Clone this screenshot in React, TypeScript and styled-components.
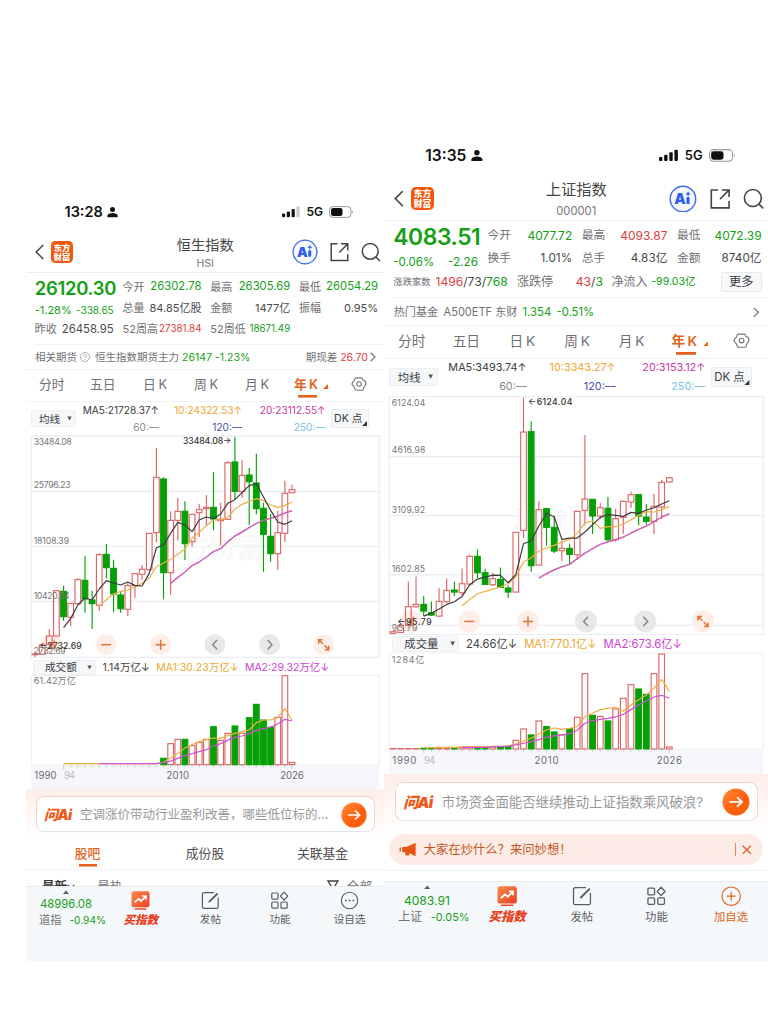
import React from "react";
import styled, { createGlobalStyle, css } from "styled-components";

/* ---------- palette ---------- */
const GREEN = "#14a014";
const RED = "#e03c3c";
const INK = "#4a4a4c";
const DIM = "#707073";
const ORANGE = "#e2631b";
const AMBER = "#eda832";
const PINK = "#c83aa0";
const VIOLET = "#cf3fd2";
const BLUE = "#4250ae";
const SKY = "#77bfe6";

const Global = createGlobalStyle`
  * { box-sizing: border-box; }
  body { margin: 0; background: #fff; }
  #root { font-family: Inter, "Noto Sans CJK SC", sans-serif; color: ${INK}; }
  svg { display: block; flex: none; }
`;

/* ---------- data ---------- */
type Candle = [number, number, number, number, "r" | "g"];
type Series = { from: number; ys: number[] };

interface ChartData {
  width: number;
  right: number;
  step: number;
  top: number;
  height: number;
  grid: number[];
  frame: [number, number];
  candles: Candle[];
  ma: [Series, Series, Series];
  scale: { text: string; y: number; w: number }[];
  high: { text: string; x: number; y: number; w: number };
  low: { text: string; x: number; y: number; w: number };
  mark: { x: number; y: number };
  tools: { xs: number[]; y: number; r: number };
}

interface VolumeData {
  width: number;
  right: number;
  step: number;
  top: number;
  height: number;
  base: number;
  frameTop: number;
  axisY: number;
  bars: { i: number; y: number; c: "r" | "g" }[];
  lines: [Series, Series];
  label: { text: string; w: number; y: number };
}

const bars = (from: number, list: string) =>
  list.split(" ").map((s, n) => ({ i: from + n, y: Number(s.slice(1)), c: s[0] as "r" | "g" }));

const hsiChart: ChartData = {
  width: 1074, right: 1060, step: 21.42, top: 24, height: 678,
  grid: [199, 364, 529], frame: [33, 697],
  candles: [
    [680, 687, 689, 695, "r"], [656, 660, 688, 688, "r"], [613, 633, 658, 662, "r"], [497, 497, 633, 633, "r"],
    [482, 499, 575, 587, "g"], [535, 535, 577, 604, "r"], [459, 464, 536, 536, "r"], [392, 466, 522, 563, "g"],
    [497, 525, 536, 612, "g"], [385, 389, 541, 558, "r"], [357, 388, 428, 460, "g"], [404, 430, 507, 562, "g"],
    [497, 510, 551, 563, "g"], [475, 482, 553, 573, "r"], [446, 446, 482, 518, "r"], [421, 433, 448, 465, "r"],
    [325, 325, 434, 434, "r"], [69, 157, 323, 352, "r"], [157, 162, 443, 523, "g"], [259, 286, 443, 509, "r"],
    [219, 259, 286, 346, "r"], [229, 259, 356, 405, "g"], [268, 268, 350, 365, "r"], [237, 254, 263, 336, "r"],
    [210, 247, 251, 302, "r"], [142, 247, 282, 316, "g"], [233, 283, 287, 361, "r"], [108, 113, 283, 285, "r"],
    [37, 111, 199, 222, "g"], [105, 151, 200, 219, "r"], [129, 150, 170, 300, "g"], [86, 174, 251, 268, "g"],
    [233, 250, 328, 440, "g"], [267, 334, 386, 410, "g"], [257, 323, 386, 435, "r"], [167, 205, 325, 351, "r"],
    [179, 194, 203, 204, "r"],
  ],
  ma: [
    { from: 4, ys: [608, 580, 540, 519, 525, 492, 467, 474, 480, 471, 481, 483, 445, 369, 359, 325, 292, 300, 320, 285, 276, 281, 267, 235, 224, 203, 182, 176, 216, 256, 291, 298, 287] },
    { from: 9, ys: [545, 524, 507, 499, 495, 486, 475, 459, 425, 414, 403, 388, 372, 340, 322, 302, 285, 284, 278, 252, 238, 229, 221, 227, 240, 247, 241, 231] },
    { from: 19, ys: [475, 457, 441, 422, 411, 396, 380, 371, 350, 333, 321, 308, 295, 286, 280, 273, 264, 257] },
  ],
  scale: [
    { text: "33484.08", y: 60, w: 114 }, { text: "25796.23", y: 190, w: 111 },
    { text: "18108.39", y: 356, w: 106 }, { text: "10420.54", y: 522, w: 108 }, { text: "2732.69", y: 688, w: 96 },
  ],
  high: { text: "33484.08→", x: 471, y: 58, w: 145 },
  low: { text: "←2732.69", x: 40, y: 671, w: 127 },
  mark: { x: 385, y: 398 },
  tools: { xs: [77, 240, 404, 567, 731, 893], y: 659, r: 31 },
};

const sseChart: ChartData = {
  width: 1152, right: 1138, step: 23.03, top: 23, height: 727,
  grid: [214, 391, 568, 720], frame: [34, 748],
  candles: [
    [738, 739, 744, 745, "r"], [716, 720, 741, 743, "r"], [588, 664, 720, 724, "r"], [573, 657, 664, 667, "r"],
    [632, 657, 677, 692, "g"], [648, 682, 689, 692, "g"], [608, 648, 692, 694, "r"], [579, 615, 649, 653, "r"],
    [588, 614, 620, 632, "g"], [549, 595, 622, 630, "r"], [507, 513, 596, 600, "r"], [492, 513, 562, 578, "g"],
    [550, 562, 597, 598, "g"], [562, 580, 598, 602, "r"], [546, 582, 606, 608, "g"], [600, 608, 620, 638, "g"],
    [440, 441, 620, 620, "r"], [37, 140, 435, 457, "r"], [108, 139, 541, 559, "g"], [348, 373, 539, 539, "r"],
    [367, 370, 426, 481, "g"], [392, 426, 497, 503, "g"], [465, 489, 496, 527, "r"], [474, 489, 507, 537, "g"],
    [376, 378, 508, 522, "r"], [149, 341, 375, 420, "r"], [341, 342, 392, 446, "g"], [352, 367, 392, 402, "r"],
    [335, 369, 463, 466, "g"], [371, 400, 463, 469, "r"], [346, 348, 396, 445, "r"], [319, 328, 350, 368, "r"],
    [327, 328, 392, 420, "g"], [356, 395, 408, 418, "g"], [325, 363, 408, 446, "r"], [283, 291, 365, 400, "r"],
    [276, 277, 290, 290, "r"],
  ],
  ma: [
    { from: 4, ys: [692, 683, 671, 657, 649, 633, 598, 581, 575, 569, 570, 592, 568, 475, 467, 422, 384, 394, 462, 458, 458, 440, 418, 396, 388, 390, 393, 381, 384, 374, 367, 356, 346] },
    { from: 9, ys: [662, 642, 625, 618, 611, 605, 595, 575, 529, 518, 497, 488, 480, 470, 462, 444, 413, 407, 429, 424, 424, 416, 403, 390, 379, 380, 374, 363] },
    { from: 19, ys: [578, 565, 553, 544, 537, 520, 503, 490, 477, 469, 463, 455, 443, 432, 422, 409, 395, 385] },
  ],
  scale: [
    { text: "6124.04", y: 63, w: 101 }, { text: "4616.98", y: 202, w: 101 },
    { text: "3109.92", y: 382, w: 100 }, { text: "1602.85", y: 559, w: 100 }, { text: "95.79", y: 738, w: 77 },
  ],
  high: { text: "←6124.04", x: 432, y: 60, w: 133 },
  low: { text: "←95.79", x: 40, y: 720, w: 103 },
  mark: { x: 385, y: 428 },
  tools: { xs: [80, 256, 432, 606, 784, 957], y: 708, r: 33 },
};

const hsiVolume: VolumeData = {
  width: 1074, right: 1060, step: 21.42, top: 75, height: 342, base: 345, frameTop: 77, axisY: 386,
  bars: bars(18, "g325 r281 r268 g268 r287 r277 r268 g230 r271 r250 g228 r250 g203 g163 g210 g232 r202 r77 r337"),
  lines: [
    { from: 4, ys: [341, 341, 341, 341, 341, 341, 341, 341, 341, 341, 341, 341, 341, 341, 337, 324, 310, 294, 284, 275, 269, 264, 265, 256, 250, 245, 240, 218, 210, 210, 202, 176, 210] },
    { from: 9, ys: [341, 341, 341, 341, 341, 341, 341, 341, 341, 338, 333, 325, 317, 311, 305, 299, 288, 281, 271, 262, 258, 250, 241, 236, 231, 222, 208, 213] },
  ],
  label: { text: "61.42万亿", w: 126, y: 103 },
};

const sseVolume: VolumeData = {
  width: 1152, right: 1138, step: 23.03, top: 67, height: 367, base: 359, frameTop: 70, axisY: 404,
  bars: bars(0, "r357 r357 r357 r357 g356 g355 r355 r355 g355 r353 r351 g353 g353 r352 g351 g350 r332 r298 g316 r274 g291 g307 r316 g297 r263 r132 g257 r260 g274 r238 r206 r165 g178 g194 r132 r73 r352"),
  lines: [
    { from: 4, ys: [354, 354, 353, 353, 353, 352, 351, 351, 351, 350, 350, 349, 343, 334, 326, 313, 301, 295, 299, 296, 291, 261, 251, 240, 236, 233, 245, 226, 210, 196, 175, 149, 185] },
    { from: 9, ys: [354, 353, 353, 353, 352, 351, 350, 346, 341, 336, 330, 323, 319, 316, 312, 302, 281, 273, 269, 266, 262, 254, 240, 226, 214, 202, 197, 206] },
  ],
  label: { text: "1284亿", w: 98, y: 101 },
};

/* ---------- layout ---------- */
const Page = styled.div`
  width: 768px;
  height: 1025px;
  padding-left: 26px;
  display: flex;
  align-items: flex-start;
  overflow: hidden;
  background: #fff;
`;

const Phone = styled.section<{ $top: number; $scale: number; $height: number }>`
  flex: none;
  width: 358px;
  height: ${(p) => p.$height}px;
  margin-top: ${(p) => p.$top}px;
  zoom: ${(p) => p.$scale};
  display: flex;
  flex-direction: column;
  white-space: nowrap;
  overflow: hidden;
`;

const Txt = styled.span<{ $s?: number; $c?: string; $w?: number; $ls?: number; $ml?: number }>`
  font-size: ${(p) => p.$s ?? 11}px;
  color: ${(p) => p.$c ?? DIM};
  font-weight: ${(p) => p.$w ?? 400};
  letter-spacing: ${(p) => p.$ls ?? 0}px;
  margin-left: ${(p) => p.$ml ?? 0}px;
  line-height: 1.3;
`;

const StatusBar = styled.div`
  height: 24px;
  flex: none;
  padding: 0 30px 0 38.5px;
  display: flex;
  align-items: center;
  color: #111;
`;

const Clock = styled.span`
  font-size: 14.5px;
  font-weight: 600;
  margin-right: 4.5px;
`;

const Network = styled.span`
  margin: 0 6px 0 6px;
  font-size: 12px;
  font-weight: 600;
`;

const Spacer = styled.i`
  flex: 1;
`;

const Header = styled.header`
  height: 49px;
  flex: none;
  display: grid;
  grid-template-columns: 47px 1fr 100px;
  padding: 0 3.5px 0 9px;
  border-bottom: 1px solid #ececee;
`;

const HeadLeft = styled.div`
  display: flex;
  align-items: center;
  justify-content: space-between;
  padding: 8px 0 0;
  width: 38px;
`;

const Logo = styled.div`
  width: 22px;
  height: 22px;
  padding-top: 2.2px;
  border-radius: 4.5px;
  background: #f4560c;
  color: #fff;
  font: 900 8.2px/8.8px "Noto Sans CJK SC", sans-serif;
  text-align: center;
`;

const HeadTitle = styled.div`
  display: flex;
  flex-direction: column;
  align-items: center;
  padding: 11px 0 0 48px;
  gap: 3.5px;
  line-height: 19px;
  font-size: 14.2px;
  color: #454547;
  small {
    font-size: 10.5px;
    line-height: 14px;
    color: #77777a;
  }
`;

const HeadTools = styled.div`
  display: flex;
  align-items: center;
  justify-content: flex-end;
  gap: 12px;
  padding-top: 8px;
`;

const Quote = styled.div`
  flex: none;
  height: 71px;
  padding: 3.3px 0 0 8.7px;
  display: flex;
  flex-direction: column;
`;

const QuoteRow = styled.div`
  height: 21.4px;
  display: grid;
  grid-template-columns: 79px 79px 80px 79px;
  column-gap: 8.8px;
`;

const BreadthRow = styled.div`
  height: 21.4px;
  padding-right: 6px;
  display: flex;
  align-items: center;
`;

const Cell = styled.div<{ $drop?: number }>`
  display: flex;
  align-items: center;
  justify-content: space-between;
  height: 21.4px;
  padding-top: ${(p) => p.$drop ?? 0}px;
`;

const More = styled.span`
  width: 38px;
  height: 19px;
  margin-left: auto;
  border: 1px solid #e7eaed;
  border-radius: 2px;
  background: #f6f8fa;
  color: #3b3b3d;
  font-size: 11.4px;
  line-height: 17px;
  text-align: center;
`;

const InfoRow = styled.div`
  flex: none;
  height: 25.5px;
  margin-left: 9px;
  padding: 1px 8px 0 0;
  display: flex;
  align-items: center;
  border-top: 1px solid #f0f0f1;
`;

const Periods = styled.nav`
  flex: none;
  height: 32.5px;
  padding: 0 17px 0 13px;
  display: grid;
  grid-template-columns: 51px 53px 51px 51px 49px 57px 16px;
  align-items: start;
  border-top: 1px solid #f0f0f1;
  border-bottom: 1px solid #f3f3f4;
  > svg { margin-top: 6px; }
`;

const Period = styled.span<{ $on?: boolean }>`
  display: flex;
  align-items: center;
  height: 27.5px;
  font-size: 12.8px;
  color: ${DIM};
  word-spacing: -1px;
  ${(p) =>
    p.$on &&
    css`
      color: ${ORANGE};
      font-weight: 600;
      svg { margin: 6px 0 0 5px; }
      background: linear-gradient(${ORANGE}, ${ORANGE}) 4px 100% / 19px 2.6px no-repeat;
    `}
`;

const Averages = styled.div`
  flex: none;
  height: 31px;
  padding-left: 5px;
  display: grid;
  grid-template-columns: 45px 83px 83px 83.5px auto;
`;

const PickerSlot = styled.div`
  padding-top: 8px;
`;

const Picker = styled.span<{ $w: number; $h: number; $pad: number }>`
  width: ${(p) => p.$w}px;
  height: ${(p) => p.$h}px;
  padding: 0 3px 0 ${(p) => p.$pad}px;
  display: flex;
  align-items: center;
  justify-content: space-between;
  background: #f5f7f9;
  border: 1px solid #edf0f3;
  border-radius: 2px;
  color: #3c3c3f;
  font-size: 10.6px;
`;

const AverageCol = styled.div`
  display: flex;
  flex-direction: column;
  align-items: flex-end;
  span { line-height: 17px; }
`;

const DkBox = styled.span`
  position: relative;
  width: 38px;
  height: 19px;
  margin: 7px 0 0 5.500px;
  padding-left: 2px;
  background: #f5f7f9;
  border: 1px solid #e9ecef;
  border-radius: 2px;
  font-size: 10.6px;
  line-height: 18px;
  color: #3c3c3f;
  svg { position: absolute; right: 1px; bottom: 1px; }
`;

const VolumeHead = styled.div`
  flex: none;
  height: 16px;
  padding: 1px 0 0 7px;
  display: flex;
  align-items: center;
  gap: 6.500px;
  > span { line-height: 15px; }
`;

const Ask = styled.div<{ $h: number }>`
  flex: none;
  height: ${(p) => p.$h}px;
  padding: 7.5px 9px 0 10px;
  background: linear-gradient(#fdeee8, #fff);
`;

const AskBox = styled.div`
  height: 35.500px;
  padding: 1.500px 7px 0 7px;
  display: flex;
  align-items: center;
  background: #fff;
  border: 1px solid;
  border-color: #f6cfc6 #f0d5d2 #dfe3ee #f3d4cf;
  border-radius: 8px;
`;

const AskMark = styled.span`
  width: 36px;
  font: italic 900 14px/18px Inter, "Noto Sans CJK SC", sans-serif;
  letter-spacing: -0.6px;
  color: #ee5a18;
`;

const Tabs = styled.div`
  flex: none;
  height: 30px;
  display: grid;
  grid-template-columns: 123px 112px 123px;
  border-bottom: 1px solid #f0f0f1;
  justify-items: center;
`;

const Tab = styled.span<{ $on?: boolean }>`
  height: 27px;
  font-size: 12.8px;
  line-height: 27px;
  color: ${(p) => (p.$on ? ORANGE : "#4f4f52")};
  ${(p) =>
    p.$on &&
    css`
      font-weight: 500;
      background: linear-gradient(${ORANGE}, ${ORANGE}) 50% 100% / 18px 2.6px no-repeat;
    `}
`;

const FeedHead = styled.div`
  flex: 1;
  min-height: 0;
  overflow: hidden;
  display: flex;
  align-items: flex-start;
  padding: 9px 12px 0 16px;
  > svg { margin-top: 1.500px; }
`;

const Banner = styled.div`
  flex: none;
  height: 29px;
  margin: 0 5px;
  padding: 0 10px 0 9px;
  display: flex;
  align-items: center;
  border-radius: 15px;
  background: #fdece5;
`;

const Rule = styled.i`
  width: 1px;
  height: 13px;
  margin-right: 6px;
  background: #dc8a66;
`;

const Divider = styled.div`
  flex: none;
  height: 1px;
  margin-top: 5px;
  background: #f0f0f1;
`;

const Dock = styled.footer`
  flex: none;
  height: 74.500px;
  margin-top: auto;
  padding-top: 4px;
  display: grid;
  grid-template-columns: 80px repeat(4, 69.6px);
  background: #f5f8fa;
  border-top: 1px solid #e9ecee;
`;

const DockItem = styled.div<{ $c?: string }>`
  display: flex;
  flex-direction: column;
  align-items: center;
  gap: 2px;
  color: ${(p) => p.$c ?? "#5c5c5f"};
  font-size: 10.6px;
  line-height: 15px;
`;

const DockIndex = styled.div`
  display: flex;
  flex-direction: column;
  align-items: center;
  svg { margin: -1.500px 0 3.500px; }
`;

const DockQuote = styled.div`
  display: flex;
  gap: 8px;
  align-items: center;
  height: 16px;
  padding-left: 13px;
`;

const BuyLabel = styled.b`
  font: italic 900 11.6px/14px "Noto Sans CJK SC", sans-serif;
  color: #e8401c;
`;

/* ---------- icons ---------- */
const Person = () => (
  <svg width="11" height="12" viewBox="0 0 11 12" fill="#111">
    <circle cx="5.5" cy="3.4" r="2.5" />
    <path d="M.4 11.2V9.6C.4 7.8 3 6.9 5.5 6.9s5.1.9 5.1 2.7v1.6z" />
  </svg>
);

const Signal = ({ faint }: { faint?: boolean }) => (
  <svg width="18" height="12" viewBox="0 0 18 12" fill="#111">
    <rect x="0" y="7.5" width="3.2" height="3.7" rx="1" />
    <rect x="4.8" y="5.4" width="3.2" height="5.8" rx="1" />
    <rect x="9.6" y="3" width="3.2" height="8.2" rx="1" />
    <rect x="14.4" y="0.6" width="3.2" height="10.6" rx="1" opacity={faint ? 0.22 : 1} />
  </svg>
);

const Battery = () => (
  <svg width="25" height="12" viewBox="0 0 25 12">
    <rect x=".5" y=".6" width="21.5" height="10.8" rx="3.6" fill="none" stroke="#999" />
    <rect x="2" y="2" width="11.5" height="8" rx="2.2" fill="#111" />
    <path d="M23.3 4.2c1 .5 1 3.100 0 3.600z" fill="#999" />
  </svg>
);

const Back = () => (
  <svg width="9" height="16" viewBox="0 0 9 16" fill="none" stroke="#4a4a4c" strokeWidth="1.5">
    <path d="M8.300 1L1.200 8l7.100 7" />
  </svg>
);

const AiBadge = () => (
  <svg width="26" height="26" viewBox="0 0 26 26">
    <circle cx="13" cy="13" r="11.900" fill="#f5f8ff" stroke="#3f6be6" strokeWidth="1.300" />
    <text x="5" y="17.800" fontSize="13.500" fontWeight="900" fill="#2f5fe8" textLength="10.500">A</text>
    <rect x="16.300" y="11.300" width="2.900" height="6.500" rx=".8" fill="#2f5fe8" />
    <path d="M17.800 5.800l.8 1.700 1.700.8-1.700.8-.8 1.700-.8-1.700-1.700-.8 1.700-.8z" fill="#2f5fe8" />
  </svg>
);

const Share = () => (
  <svg width="19" height="20" viewBox="0 0 19 20" fill="none" stroke="#454547" strokeWidth="1.500">
    <path d="M7.500 1.800H1.200v16.700h16.600v-6.300M11 1.800h6.800v6.600M17.600 2l-8.300 8.500" />
  </svg>
);

const Search = () => (
  <svg width="20" height="20" viewBox="0 0 20 20" fill="none" stroke="#454547" strokeWidth="1.500">
    <circle cx="9.200" cy="9.300" r="7.900" />
    <path d="M14.900 15l4 4" />
  </svg>
);

const Chevron = () => (
  <svg width="6" height="10" viewBox="0 0 6 10" fill="none" stroke="#77777a" strokeWidth="1.200">
    <path d="M.7.8L5 5 .7 9.200" />
  </svg>
);

const Help = () => (
  <svg width="10" height="10" viewBox="0 0 10 10" fill="none" stroke="#9a9a9d" strokeWidth=".8">
    <circle cx="5" cy="5" r="4.500" />
    <path d="M3.600 4c0-1.900 2.800-1.800 2.800-.1C6.400 4.900 5 4.900 5 6.100M5 7v.8" />
  </svg>
);

const Corner = ({ color, size = 5 }: { color: string; size?: number }) => (
  <svg width={size} height={size} viewBox="0 0 5 5" fill={color}>
    <path d="M5 0v5H0z" />
  </svg>
);

const Down = () => (
  <svg width="5" height="5" viewBox="0 0 5 5" fill="#555">
    <path d="M.3.500h4.400L2.500 4.500z" />
  </svg>
);

const Caret = () => (
  <svg width="8" height="10" viewBox="0 0 8 10" fill="none" stroke="#444" strokeWidth="1.300">
    <path d="M.8 4.800L4 8.600 7.200 4.800" />
  </svg>
);

const Gear = () => (
  <svg width="16" height="16" viewBox="0 0 16 16" fill="none" stroke="#77777a" strokeWidth="1.100">
    <path d="M5 1.900h6l.9 2 1.100.7 1.200.3L15 8l-.6 1.200-1.500 2-.9 2.600-1 .4H5l-.9-.9-.9-2.300L1.500 9.200.9 8l.6-1.300 1.600-1.900L4.100 2.300z" strokeLinejoin="round" />
    <circle cx="8" cy="8" r="2.200" />
  </svg>
);

const Go = () => (
  <svg width="26" height="26" viewBox="0 0 26 26">
    <defs>
      <linearGradient id="go" x1="0" y1="0" x2="1" y2="1">
        <stop offset="0" stopColor="#ff8a3c" />
        <stop offset=".6" stopColor="#ff5f0c" />
      </linearGradient>
    </defs>
    <circle cx="13" cy="13" r="12.600" fill="url(#go)" />
    <path d="M7 13h11.500M14 8.500l4.600 4.500-4.600 4.500" fill="none" stroke="#fff" strokeWidth="1.700" />
  </svg>
);

const Filter = () => (
  <svg width="12" height="13" viewBox="0 0 12 13" fill="none" stroke="#444" strokeWidth="1.300">
    <path d="M1 1h10L7.500 6.500V12l-3-1.500v-4z" />
  </svg>
);

const Horn = () => (
  <svg width="17" height="14" viewBox="0 0 17 14" fill="#e8550f">
    <rect x="0.500" y="5" width="1.300" height="4" rx=".6" />
    <path d="M3 4.600h4L15.500.800v12.400L9.500 10.600v1.900H6V9.600H3z" />
  </svg>
);

const Close = () => (
  <svg width="9" height="9" viewBox="0 0 9 9" stroke="#d0602c" strokeWidth="1.200">
    <path d="M.7.7l7.600 7.600M8.300.7L.7 8.300" />
  </svg>
);

const Up = () => (
  <svg width="6" height="4" viewBox="0 0 6 4" fill="#5c5c5f">
    <path d="M0 4l3-3.600L6 4z" />
  </svg>
);

const Buy = () => (
  <svg width="19" height="19" viewBox="0 0 19 19">
    <defs>
      <linearGradient id="buy" x1="0" y1="0" x2="1" y2="1">
        <stop offset="0" stopColor="#f98a4e" />
        <stop offset="1" stopColor="#ee3f26" />
      </linearGradient>
    </defs>
    <rect x=".5" y=".3" width="18" height="16" rx="2.400" fill="url(#buy)" />
    <rect x="3.500" y="17.200" width="12" height="1.500" rx=".7" fill="#ef4a2a" />
    <path d="M3.600 11.400l4-3.600 2.500 2.200 4.400-4.500M11.200 5h3.700v3.600" fill="none" stroke="#fff" strokeWidth="1.700" />
  </svg>
);

const Post = () => (
  <svg width="19" height="19" viewBox="0 0 19 19" fill="none" stroke="#5c5c5f" strokeWidth="1.200">
    <path d="M13 1.600H3a1.600 1.600 0 0 0-1.600 1.600v12.600A1.600 1.600 0 0 0 3 17.400h12.600a1.600 1.600 0 0 0 1.600-1.600V6.500" />
    <path d="M7.800 11.200l8.800-8.700" strokeWidth="1.800" />
  </svg>
);

const Grid = () => (
  <svg width="19" height="19" viewBox="0 0 19 19" fill="none" stroke="#5c5c5f" strokeWidth="1.200">
    <rect x="1.800" y="2" width="6.200" height="6.200" rx="1" />
    <rect x="1.800" y="11" width="6.200" height="6.200" rx="1" />
    <rect x="11" y="11" width="6.200" height="6.200" rx="1" />
    <path d="M14.100 1.200l3.700 3.900-3.700 3.900-3.700-3.900z" strokeLinejoin="round" />
  </svg>
);

const Dots = () => (
  <svg width="19" height="19" viewBox="0 0 19 19" fill="none" stroke="#5c5c5f" strokeWidth="1.100">
    <circle cx="9.500" cy="9.500" r="8.200" />
    <path d="M4.900 9.500h1.700M8.700 9.500h1.700M12.500 9.500h1.700" strokeWidth="1.600" />
  </svg>
);

const Plus = () => (
  <svg width="19" height="19" viewBox="0 0 19 19" fill="none" stroke={ORANGE} strokeWidth="1.100">
    <circle cx="9.500" cy="9.500" r="8.600" />
    <path d="M5.300 9.500h8.400M9.500 5.300v8.400" />
  </svg>
);

/* ---------- charts ---------- */
const FIRST_X = 27;
const points = (s: Series, step: number) => s.ys.map((y, n) => `${FIRST_X + (s.from + n) * step},${y}`).join(" ");
const fill = { r: "#fff", g: "#05a005" };
const edge = { r: "#dd6464", g: "#05a005" };

const PriceChart = ({ d }: { d: ChartData }) => (
  <svg width="358" height="226" viewBox={`0 ${d.top} ${d.width} ${d.height}`} preserveAspectRatio="none">
    <g stroke="#eaedf4" strokeWidth="4">
      {d.grid.map((y) => <path key={y} d={`M16 ${y}H${d.right}`} />)}
      <path d={`M16 ${d.frame[0]}H${d.right}V${d.frame[1]}H16z`} fill="none" />
    </g>
    <text x={d.mark.x} y={d.mark.y} fontSize="82" fontWeight="700" fill="#f8f8f8">东方财富</text>
    {d.tools.xs.map((x, n) => {
      const warm = n !== 3 && n !== 4;
      const y = d.tools.y;
      return (
        <g key={x} fill="none" stroke={warm ? "#e2763a" : "#88888b"} strokeWidth="4.500">
          <circle cx={x} cy={y} r={d.tools.r} fill={warm ? "#fdeee7" : "#e8e8e9"} stroke="none" />
          {n === 0 && <path d={`M${x + 10} ${y - 17}l-20 17l20 17z`} fill="#f2a078" stroke="none" />}
          {n === 1 && <path d={`M${x - 15} ${y}h30`} />}
          {n === 2 && <path d={`M${x - 15} ${y}h30M${x} ${y - 15}v30`} />}
          {n === 3 && <path d={`M${x + 6} ${y - 14}l-13 14l13 14`} />}
          {n === 4 && <path d={`M${x - 6} ${y - 14}l13 14l-13 14`} />}
          {n === 5 && (
            <path d={`M${x - 15} ${y - 3}v-12h12M${x - 14} ${y - 14}l12 12M${x + 15} ${y + 3}v12h-12M${x + 14} ${y + 14}l-12 -12`} />
          )}
        </g>
      );
    })}
    {d.candles.map(([hi, a, b, lo, c], i) => {
      const x = FIRST_X + i * d.step;
      return (
        <g key={i} stroke={edge[c]} strokeWidth="3.400" fill={c === "r" && i < 4 ? "none" : fill[c]}>
          <path d={`M${x} ${hi}V${a}M${x} ${b}V${lo}`} />
          <rect x={x - 8.500} y={a} width="17" height={b - a} />
        </g>
      );
    })}
    <g fontSize="26" fill="#77777a">
      {d.scale.map((t) => <text key={t.text} x="23" y={t.y} textLength={t.w}>{t.text}</text>)}
    </g>
    <g fill="none" strokeWidth="3.600" strokeLinejoin="round">
      <polyline points={points(d.ma[2], d.step)} stroke="#cf5fb4" strokeWidth="4.500" />
      <polyline points={points(d.ma[1], d.step)} stroke="#efb048" />
      <polyline points={points(d.ma[0], d.step)} stroke="#3c3c3e" />
    </g>
    <g fontSize="26" fontWeight="500" fill="#333">
      <text x={d.high.x} y={d.high.y} textLength={d.high.w}>{d.high.text}</text>
      <text x={d.low.x} y={d.low.y} textLength={d.low.w}>{d.low.text}</text>
    </g>
  </svg>
);

const VolumeChart = ({ d }: { d: VolumeData }) => {
  const at = (i: number) => FIRST_X + i * d.step;
  return (
    <svg width="358" height="114" viewBox={`0 ${d.top} ${d.width} ${d.height}`} preserveAspectRatio="none">
      <rect x="16" y={d.base} width={d.right - 16} height="120" fill="#f6f7fb" />
      <path d={`M16 ${d.frameTop}H${d.right}V${d.base}H16z`} fill="none" stroke="#eceef2" strokeWidth="3" />
      <g stroke="#c4c5c9" strokeWidth="2.500">
        {Array.from({ length: 33 }, (_, n) => n + 4).map((i) => (
          <path key={i} d={`M${at(i)} ${d.base}v${i % 16 === 4 ? 12 : 7}`} />
        ))}
      </g>
      {d.bars.map((b) => (
        <rect key={b.i} x={at(b.i) - 8.500} y={b.y} width="17" height={Math.max(d.base - b.y - 1, 1)} fill={fill[b.c]} stroke={edge[b.c]} strokeWidth="3.400" />
      ))}
      <g fill="none" strokeWidth="3.600" strokeLinejoin="round">
        <polyline points={points(d.lines[0], d.step)} stroke="#efb048" />
        <polyline points={points(d.lines[1], d.step)} stroke="#cf52d4" />
      </g>
      <text x="23" y={d.label.y} fontSize="27" textLength={d.label.w} fill="#77777a">{d.label.text}</text>
      <g fontSize="29" fill="#6d6d70">
        <text x={at(4) + 1} y={d.axisY} textLength="34" fill="#bdbdc0">94</text>
        <text x="25" y={d.axisY} textLength={d.width / 16}>1990</text>
        <text x={at(20)} y={d.axisY} textAnchor="middle" textLength={d.width / 16}>2010</text>
        <text x={at(36)} y={d.axisY} textAnchor="middle" textLength={d.width / 15.200}>2026</text>
      </g>
    </svg>
  );
};

/* ---------- shared blocks ---------- */
const Top = ({ time, name, code, faint }: { time: string; name: string; code: string; faint?: boolean }) => (
  <>
    <StatusBar>
      <Clock>{time}</Clock>
      <Person />
      <Spacer />
      <Signal faint={faint} />
      <Network>5G</Network>
      <Battery />
    </StatusBar>
    <Header>
      <HeadLeft>
        <Back />
        <Logo>东方<br />财富</Logo>
      </HeadLeft>
      <HeadTitle>{name}<small>{code}</small></HeadTitle>
      <HeadTools>
        <AiBadge />
        <Share />
        <Search />
      </HeadTools>
    </Header>
  </>
);

const Pair = ({ k, v, c = INK, s = 11, ls = 0 }: { k: string; v: string; c?: string; s?: number; ls?: number }) => (
  <Cell>
    <Txt>{k}</Txt>
    <Txt $c={c} $s={s} $ls={ls}>{v}</Txt>
  </Cell>
);

const PeriodNav = () => (
  <Periods>
    <Period>分时</Period>
    <Period>五日</Period>
    <Period>日 K</Period>
    <Period>周 K</Period>
    <Period>月 K</Period>
    <Period $on>年 K <Corner color={ORANGE} /></Period>
    <Gear />
  </Periods>
);

const AverageRow = ({ ma5, ma10, ma20 }: { ma5: string; ma10: string; ma20: string }) => {
  const cols: [string, string, string, string][] = [
    [ma5, "#3c3c3f", "60:––", "#88888b"],
    [ma10, AMBER, "120:––", BLUE],
    [ma20, PINK, "250:––", SKY],
  ];
  return (
    <Averages>
      <PickerSlot><Picker $w={45} $h={17} $pad={7}>均线<Down /></Picker></PickerSlot>
      {cols.map(([a, ca, b, cb]) => (
        <AverageCol key={a}>
          <Txt $s={10.1} $c={ca}>{a}</Txt>
          <Txt $s={10.1} $c={cb}>{b}</Txt>
        </AverageCol>
      ))}
      <DkBox>DK 点<Corner color="#333" size={5} /></DkBox>
    </Averages>
  );
};

const VolumeRow = ({ kind, now, ma1, ma2 }: { kind: string; now: string; ma1: string; ma2: string }) => (
  <VolumeHead>
    <Picker $w={63} $h={15} $pad={11}>{kind}<Down /></Picker>
    <Txt $s={10.5} $c="#444">{now}</Txt>
    <Txt $s={10.5} $c={AMBER}>{ma1}</Txt>
    <Txt $s={10.5} $c={VIOLET}>{ma2}</Txt>
  </VolumeHead>
);

const AskBar = ({ text, h, s }: { text: string; h: number; s: number }) => (
  <Ask $h={h}>
    <AskBox>
      <AskMark>问Ai</AskMark>
      <Txt $s={s} $c="#98989b">{text}</Txt>
      <Spacer />
      <Go />
    </AskBox>
  </Ask>
);

const BottomBar = ({ value, name, pct, last }: { value: string; name: string; pct: string; last: React.ReactNode }) => (
  <Dock>
    <DockIndex>
      <Up />
      <Txt $s={11.3} $c={GREEN}>{value}</Txt>
      <DockQuote>
        <Txt $s={11.2}>{name}</Txt>
        <Txt $s={10.2} $c={GREEN}>{pct}</Txt>
      </DockQuote>
    </DockIndex>
    <DockItem><Buy /><BuyLabel>买指数</BuyLabel></DockItem>
    <DockItem><Post />发帖</DockItem>
    <DockItem><Grid />功能</DockItem>
    {last}
  </Dock>
);

/* ---------- screens ---------- */
const HangSeng = () => (
  <Phone $top={199.700} $scale={1} $height={761.300}>
    <Top time="13:28" name="恒生指数" code="HSI" faint />
    <Quote>
      <QuoteRow>
        <Cell $drop={3}><Txt $s={18.5} $w={600} $c={GREEN} $ls={-0.3}>26120.30</Txt></Cell>
        <Pair k="今开" v="26302.78" c={GREEN} s={11.3} />
        <Pair k="最高" v="26305.69" c={GREEN} s={11.3} />
        <Pair k="最低" v="26054.29" c={GREEN} s={11.3} />
      </QuoteRow>
      <QuoteRow>
        <Cell $drop={4}><Txt $c={GREEN}>-1.28%</Txt><Txt $c={GREEN} $s={10}>-338.65</Txt></Cell>
        <Pair k="总量" v="84.85亿股" />
        <Pair k="金额" v="1477亿" />
        <Pair k="振幅" v="0.95%" />
      </QuoteRow>
      <QuoteRow>
        <Pair k="昨收" v="26458.95" s={11.3} />
        <Pair k="52周高" v="27381.84" c={RED} s={9.8} />
        <Pair k="52周低" v="18671.49" c={GREEN} s={9.8} />
      </QuoteRow>
    </Quote>
    <InfoRow>
      <Txt $s={10.5}>相关期货</Txt>
      <Txt $ml={3}><Help /></Txt>
      <Txt $s={10.5} $ml={5}>恒生指数期货主力</Txt>
      <Txt $s={10.5} $c={GREEN} $ml={3}>26147 -1.23%</Txt>
      <Spacer />
      <Txt $s={10.5}>期现差</Txt>
      <Txt $s={10.5} $c={RED} $ml={3}>26.70</Txt>
      <Txt $ml={2}><Chevron /></Txt>
    </InfoRow>
    <PeriodNav />
    <AverageRow ma5="MA5:21728.37↑" ma10="10:24322.53↑" ma20="20:23112.55↑" />
    <PriceChart d={hsiChart} />
    <VolumeRow kind="成交额" now="1.14万亿↓" ma1="MA1:30.23万亿↓" ma2="MA2:29.32万亿↓" />
    <VolumeChart d={hsiVolume} />
    <AskBar h={51} s={12.5} text="空调涨价带动行业盈利改善，哪些低位标的…" />
    <Tabs>
      <Tab $on>股吧</Tab>
      <Tab>成份股</Tab>
      <Tab>关联基金</Tab>
    </Tabs>
    <FeedHead>
      <Txt $s={12.6} $w={700} $c="#333">最新</Txt>
      <Caret />
      <Txt $s={12.6} $ml={22}>最热</Txt>
      <Spacer />
      <Filter />
      <Txt $s={12.6} $ml={8}>全部</Txt>
    </FeedHead>
    <BottomBar value="48996.08" name="道指" pct="-0.94%" last={<DockItem><Dots />设自选</DockItem>} />
  </Phone>
);

const Shanghai = () => (
  <Phone $top={133.1} $scale={1.0726} $height={762.8}>
    <Top time="13:35" name="上证指数" code="000001" />
    <Quote>
      <QuoteRow>
        <Cell $drop={4}><Txt $s={21.3} $w={600} $c={GREEN} $ls={-0.4}>4083.51</Txt></Cell>
        <Pair k="今开" v="4077.72" c={GREEN} s={11.2} />
        <Pair k="最高" v="4093.87" c={RED} s={11.2} />
        <Pair k="最低" v="4072.39" c={GREEN} s={11.2} />
      </QuoteRow>
      <QuoteRow>
        <Cell $drop={6}><Txt $c={GREEN} $s={10.700}>-0.06%</Txt><Txt $c={GREEN}>-2.26</Txt></Cell>
        <Pair k="换手" v="1.01%" />
        <Pair k="总手" v="4.83亿" />
        <Pair k="金额" v="8740亿" />
      </QuoteRow>
      <BreadthRow>
        <Txt $s={8.7}>涨跌家数</Txt>
        <Txt $s={11.3} $c={RED} $ml={4.500}>1496</Txt>
        <Txt $s={11.3} $c={INK}>/73/</Txt>
        <Txt $s={11.3} $c={GREEN}>768</Txt>
        <Txt $s={11.3} $ml={8.500}>涨跌停</Txt>
        <Txt $s={11.3} $c={RED} $ml={21}>43</Txt>
        <Txt $s={11.3} $c={INK}>/</Txt>
        <Txt $s={11.3} $c={GREEN}>3</Txt>
        <Txt $s={11.2} $ml={8}>净流入</Txt>
        <Txt $s={9.9} $c={GREEN} $ml={3.500}>-99.03亿</Txt>
        <More>更多</More>
      </BreadthRow>
    </Quote>
    <InfoRow>
      <Txt $s={10.4}>热门基金</Txt>
      <Txt $s={10.3} $ml={5}>A500ETF 东财</Txt>
      <Txt $s={10.5} $c={GREEN} $ml={5}>1.354</Txt>
      <Txt $s={10.5} $c={GREEN} $ml={5}>-0.51%</Txt>
      <Spacer />
      <Chevron />
    </InfoRow>
    <PeriodNav />
    <AverageRow ma5="MA5:3493.74↑" ma10="10:3343.27↑" ma20="20:3153.12↑" />
    <PriceChart d={sseChart} />
    <VolumeRow kind="成交量" now="24.66亿↓" ma1="MA1:770.1亿↓" ma2="MA2:673.6亿↓" />
    <VolumeChart d={sseVolume} />
    <AskBar h={55.5} s={12.5} text="市场资金面能否继续推动上证指数乘风破浪?" />
    <Banner>
      <Horn />
      <Txt $s={11.5} $c="#c4541c" $ml={6}>大家在炒什么？来问妙想！</Txt>
      <Spacer />
      <Rule />
      <Close />
    </Banner>
    <Divider />
    <BottomBar value="4083.91" name="上证" pct="-0.05%" last={<DockItem $c={ORANGE}><Plus />加自选</DockItem>} />
  </Phone>
);

export default function App() {
  return (
    <>
      <Global />
      <Page>
        <HangSeng />
        <Shanghai />
      </Page>
    </>
  );
}
